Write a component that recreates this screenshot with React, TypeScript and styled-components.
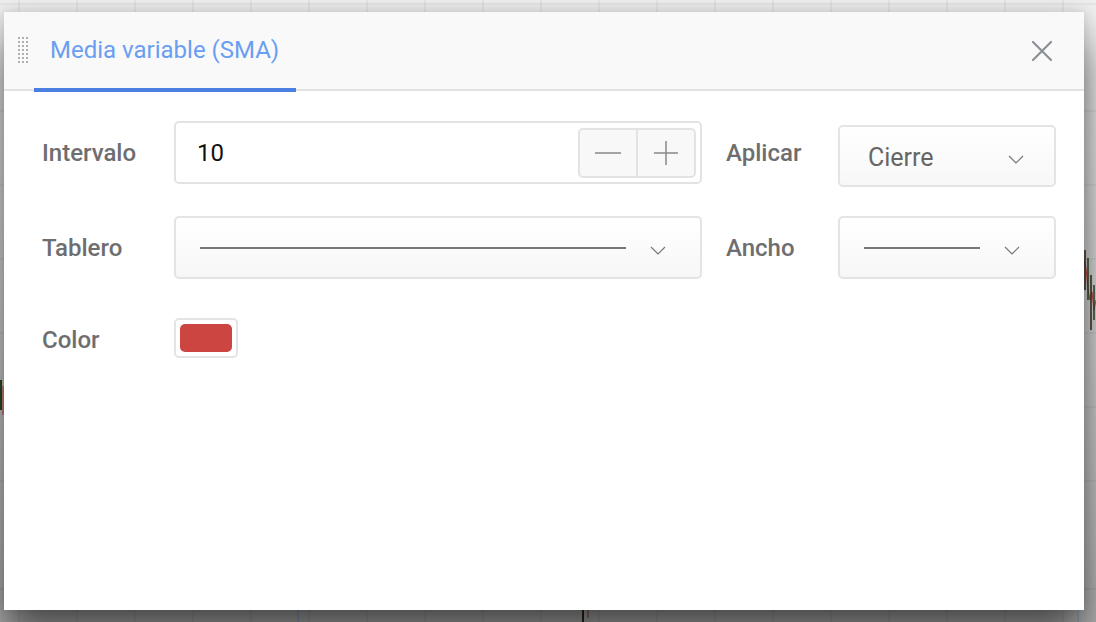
import styled, { createGlobalStyle } from "styled-components";

const GlobalStyle = createGlobalStyle`
  html, body {
    margin: 0;
    padding: 0;
  }
  body {
    font-family: Roboto, "Liberation Sans", sans-serif;
    background: #ececec;
  }
  * {
    box-sizing: border-box;
  }
`;

const Backdrop = styled.div`
  position: relative;
  width: 1096px;
  height: 622px;
  overflow: hidden;
  padding: 12px 12px 12px 4px;
  background: linear-gradient(#efefef 0%, #dadada 50%, #b4b4b4 100%);
`;

const ChartLayer = styled.svg`
  position: absolute;
  inset: 0;
  width: 100%;
  height: 100%;
`;

const Modal = styled.div`
  position: relative;
  display: flex;
  flex-direction: column;
  width: 100%;
  height: 100%;
  background: #ffffff;
  box-shadow: 0 30px 40px rgba(0, 0, 0, 0.55), 0 0 14px rgba(0, 0, 0, 0.16);
`;

const Header = styled.div`
  display: flex;
  align-items: stretch;
  height: 79px;
  padding-left: 14px;
  background: #f9f9f9;
  border-bottom: 2px solid #e3e3e3;
`;

const Handle = styled.div`
  display: flex;
  align-items: center;
  margin-right: 5px;
`;

const Tab = styled.div`
  display: flex;
  align-items: center;
  padding: 0 17px 0 16px;
  margin-bottom: -3px;
  border-bottom: 4px solid #4a7ee0;
  color: #6a9ef2;
  font-size: 24px;
  font-weight: 400;
`;

const Spacer = styled.div`
  flex: 1;
`;

const CloseButton = styled.button`
  display: flex;
  align-items: center;
  justify-content: center;
  align-self: center;
  margin-right: 30px;
  padding: 0;
  width: 24px;
  height: 24px;
  border: none;
  background: transparent;
  cursor: pointer;
`;

const Body = styled.div`
  flex: 1;
  padding: 30px 28px 0 38px;
`;

const Form = styled.div`
  display: grid;
  grid-template-columns: 132px 528px 136px 218px;
  grid-template-rows: 63px 63px 58px;
  row-gap: 32px;
  align-items: center;
`;

const Label = styled.div<{ $indent?: boolean }>`
  padding-left: ${(p) => (p.$indent ? "24px" : "0")};
  color: #6e6e70;
  font-size: 24px;
  font-weight: 500;
`;

const InputBox = styled.div`
  display: flex;
  align-items: center;
  height: 63px;
  padding: 0 4px 0 21px;
  border: 2px solid #e3e3e3;
  border-radius: 5px;
  background: #fff;
`;

const ValueInput = styled.input`
  flex: 1;
  min-width: 0;
  border: none;
  outline: none;
  background: transparent;
  font-family: Roboto, "Liberation Sans", sans-serif;
  font-size: 24px;
  color: #111;
  padding: 0;
`;

const Stepper = styled.div`
  display: flex;
  width: 118px;
  height: 50px;
  border: 2px solid #e3e3e3;
  border-radius: 5px;
  background: #f8f8f8;
  overflow: hidden;
`;

const StepButton = styled.button`
  flex: 1;
  display: flex;
  align-items: center;
  justify-content: center;
  padding: 0;
  border: none;
  background: transparent;
  & + & {
    border-left: 2px solid #e3e3e3;
  }
`;

const Select = styled.div<{ $shift?: number; $line?: boolean }>`
  display: flex;
  align-items: center;
  justify-content: space-between;
  gap: 24px;
  align-self: start;
  height: ${(p) => (p.$shift ? "62px" : "63px")};
  margin-top: ${(p) => p.$shift || 0}px;
  padding: ${(p) => (p.$line ? "0 34px 0 24px" : "0 30px 0 28px")};
  border: 2px solid #e4e4e4;
  border-radius: 5px;
  background: linear-gradient(#ffffff, #f7f7f7);
`;

const SelectText = styled.span`
  padding-top: 3px;
  color: #666;
  font-size: 25px;
`;

const LinePreview = styled.div`
  flex: 1;
  height: 2px;
  background: #777;
`;

const ChevronBox = styled.span`
  display: flex;
  margin-top: 6px;
`;

const Swatch = styled.div`
  align-self: start;
  margin-top: 7px;
  width: 64px;
  height: 40px;
  padding: 4px;
  border: 2px solid #e4e4e4;
  border-radius: 5px;
  background: #fff;
`;

const SwatchFill = styled.div<{ $color: string }>`
  width: 100%;
  height: 100%;
  border-radius: 5px;
  background: ${(p) => p.$color};
`;

const Chevron = () => (
  <ChevronBox>
    <svg width="16" height="9" viewBox="0 0 16 9">
      <polyline points="1,1 8,8 15,1" fill="none" stroke="#777" strokeWidth="1.2" />
    </svg>
  </ChevronBox>
);

const DragDots = () => {
  const dots = [];
  for (let c = 0; c < 3; c++) {
    for (let r = 0; r < 7; r++) {
      dots.push(<rect key={`${c}-${r}`} x={c * 4} y={r * 4} width="2" height="2" fill="#b0b0b0" />);
    }
  }
  return (
    <svg width="11" height="27" viewBox="0 0 11 27">
      {dots}
    </svg>
  );
};

const ChartBackground = () => {
  const vlines = [];
  for (let x = 19; x < 1096; x += 58) vlines.push(x);
  const hlines = [4, 111, 185, 259, 333, 407, 481, 589];
  return (
    <ChartLayer viewBox="0 0 1096 622" preserveAspectRatio="none">
      {vlines.map((x) => (
        <line key={`v${x}`} x1={x} y1="0" x2={x} y2="622" stroke="rgba(0,0,0,0.08)" strokeWidth="1" />
      ))}
      {hlines.map((y) => (
        <line key={`h${y}`} x1="0" y1={y} x2="1096" y2={y} stroke="rgba(0,0,0,0.08)" strokeWidth="1" />
      ))}
      <line x1="298" y1="560" x2="298" y2="622" stroke="#6fa3d8" strokeWidth="1" />
      <line x1="1078" y1="560" x2="1078" y2="622" stroke="#6fa3d8" strokeWidth="1" />
      <polyline points="1084,262 1086,268 1088,290 1090,300 1092,292 1094,310 1096,300" fill="none" stroke="#c84a46" strokeWidth="1" />
      <line x1="1085" y1="250" x2="1085" y2="290" stroke="#3e2a1e" strokeWidth="1.5" />
      <line x1="1088" y1="258" x2="1088" y2="300" stroke="#2f4a22" strokeWidth="1.5" />
      <line x1="1091" y1="275" x2="1091" y2="330" stroke="#3b2c1e" strokeWidth="1.5" />
      <line x1="1094" y1="285" x2="1094" y2="320" stroke="#2f4a22" strokeWidth="1.5" />
      <line x1="1" y1="380" x2="1" y2="410" stroke="#2f4a22" strokeWidth="2" />
      <line x1="3" y1="386" x2="3" y2="415" stroke="#c84a46" strokeWidth="1" />
      <line x1="583" y1="600" x2="583" y2="622" stroke="#2b2b1e" strokeWidth="2" />
      <line x1="588" y1="602" x2="588" y2="618" stroke="#a83a36" strokeWidth="1" />
    </ChartLayer>
  );
};

const App = () => {
  return (
    <>
      <GlobalStyle />
      <Backdrop>
        <ChartBackground />
        <Modal>
          <Header>
            <Handle>
              <DragDots />
            </Handle>
            <Tab>Media variable (SMA)</Tab>
            <Spacer />
            <CloseButton aria-label="Cerrar">
              <svg width="22" height="22" viewBox="0 0 22 22">
                <path d="M2 2 L20 20 M20 2 L2 20" stroke="#8b9098" strokeWidth="2.2" strokeLinecap="round" />
              </svg>
            </CloseButton>
          </Header>
          <Body>
            <Form>
              <Label>Intervalo</Label>
              <InputBox>
                <ValueInput defaultValue="10" />
                <Stepper>
                  <StepButton aria-label="menos">
                    <svg width="26" height="26" viewBox="0 0 26 26">
                      <line x1="0" y1="13" x2="26" y2="13" stroke="#888" strokeWidth="1.5" />
                    </svg>
                  </StepButton>
                  <StepButton aria-label="más">
                    <svg width="24" height="24" viewBox="0 0 24 24">
                      <line x1="0" y1="12" x2="24" y2="12" stroke="#888" strokeWidth="1.5" />
                      <line x1="12" y1="0" x2="12" y2="24" stroke="#888" strokeWidth="1.5" />
                    </svg>
                  </StepButton>
                </Stepper>
              </InputBox>
              <Label $indent>Aplicar</Label>
              <Select $shift={4}>
                <SelectText>Cierre</SelectText>
                <Chevron />
              </Select>

              <Label>Tablero</Label>
              <Select $line>
                <LinePreview />
                <Chevron />
              </Select>
              <Label $indent>Ancho</Label>
              <Select $line>
                <LinePreview />
                <Chevron />
              </Select>

              <Label>Color</Label>
              <Swatch>
                <SwatchFill $color="#cc4540" />
              </Swatch>
            </Form>
          </Body>
        </Modal>
      </Backdrop>
    </>
  );
};

export default App;
